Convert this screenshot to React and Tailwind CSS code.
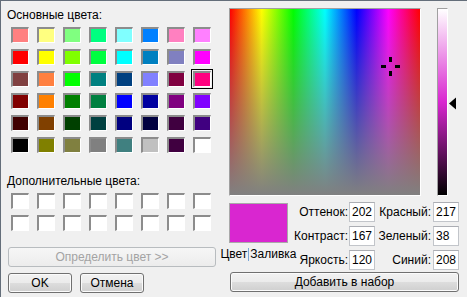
const basicColors = [
  'bg-[#ff8080]', 'bg-[#ffff80]', 'bg-[#80ff80]', 'bg-[#00ff80]', 'bg-[#80ffff]', 'bg-[#0080ff]', 'bg-[#ff80c0]', 'bg-[#ff80ff]',
  'bg-[#ff0000]', 'bg-[#ffff00]', 'bg-[#80ff00]', 'bg-[#00ff40]', 'bg-[#00ffff]', 'bg-[#0080c0]', 'bg-[#8080c0]', 'bg-[#ff00ff]',
  'bg-[#804040]', 'bg-[#ff8040]', 'bg-[#00ff00]', 'bg-[#008080]', 'bg-[#004080]', 'bg-[#8080ff]', 'bg-[#800040]', 'bg-[#ff0080]',
  'bg-[#800000]', 'bg-[#ff8000]', 'bg-[#008000]', 'bg-[#008040]', 'bg-[#0000ff]', 'bg-[#0000a0]', 'bg-[#800080]', 'bg-[#8000ff]',
  'bg-[#400000]', 'bg-[#804000]', 'bg-[#004000]', 'bg-[#004040]', 'bg-[#000080]', 'bg-[#000040]', 'bg-[#400040]', 'bg-[#400080]',
  'bg-[#000000]', 'bg-[#808000]', 'bg-[#808040]', 'bg-[#808080]', 'bg-[#408080]', 'bg-[#c0c0c0]', 'bg-[#400040]', 'bg-[#ffffff]'
]

const SELECTED = 23

function Swatch({ color, selected }) {
  return (
    <div
      className={`w-[18px] h-[16px] border-t-2 border-l-2 border-t-[#8c8c8c] border-l-[#8c8c8c] border-r border-b border-r-white border-b-white ${color} ${selected ? 'outline outline-black outline-offset-1' : ''}`}
    />
  )
}

function Button({ children, disabled, className = '' }) {
  if (disabled) {
    return (
      <div className={`h-[20px] flex items-center justify-center rounded-[3px] border border-[#b8bcbf] bg-[linear-gradient(to_bottom,#f6f6f6,#ececec)] text-[#a3a3a3] ${className}`}>
        {children}
      </div>
    )
  }
  return (
    <div className={`h-[20px] flex items-center justify-center rounded-[3px] border border-[#707070] shadow-[inset_0_0_0_1px_#fbfbfb] bg-[linear-gradient(to_bottom,#f2f2f2_0%,#ebebeb_50%,#dddddd_51%,#cfcfcf_100%)] ${className}`}>
      {children}
    </div>
  )
}

function Field({ value }) {
  return (
    <div className="h-[20px] w-[26px] bg-white border border-[#c2c5ca] border-t-[#abadb3] pl-[2px] leading-[18px]">
      {value}
    </div>
  )
}

export default function App() {
  return (
    <div className="w-[467px] h-[297px] bg-[#f0f0f0] border-t border-l border-[#646e7a] flex font-['Liberation_Sans',Arial,sans-serif] text-[12px] text-black overflow-hidden">
      {/* left side: palettes */}
      <div className="w-[221px] flex flex-col">
        <div className="ml-[6px] mt-[7px] leading-[14px]">Основные цвета:</div>
        <div className="ml-[10px] mt-[5px] grid grid-cols-[repeat(8,18px)] gap-x-[8px] gap-y-[6px]">
          {basicColors.map((c, i) => (
            <Swatch key={i} color={c} selected={i === SELECTED} />
          ))}
        </div>
        <div className="ml-[6px] mt-[21px] leading-[14px]">Дополнительные цвета:</div>
        <div className="ml-[10px] mt-[5px] grid grid-cols-[repeat(8,18px)] gap-x-[8px] gap-y-[6px]">
          {Array.from({ length: 16 }).map((_, i) => (
            <Swatch key={i} color="bg-white" />
          ))}
        </div>
        <Button disabled className="ml-[7px] mt-[16px] w-[208px]">Определить цвет &gt;&gt;</Button>
        <div className="ml-[7px] mt-[6px] flex gap-[8px]">
          <Button className="w-[64px]">OK</Button>
          <Button className="w-[64px]">Отмена</Button>
        </div>
      </div>

      {/* right side: spectrum and values */}
      <div className="ml-[7px] flex flex-col">
        <div className="mt-[7px] flex">
          <div className="w-[192px] h-[188px] border-t border-l border-[#a0a0a0] border-r border-b border-r-white border-b-white bg-[linear-gradient(to_right,#ff0000,#ffff00,#00ff00,#00ffff,#0000ff,#ff00ff,#ff0000)]">
            <div className="relative w-full h-full bg-[linear-gradient(to_bottom,rgba(128,128,128,0),#808080)]">
              <svg className="absolute left-[150px] top-[47px]" width="21" height="21" viewBox="0 0 21 21">
                <rect x="1" y="9" width="5" height="3" fill="#000" />
                <rect x="15" y="9" width="5" height="3" fill="#000" />
                <rect x="9" y="1" width="3" height="5" fill="#000" />
                <rect x="9" y="15" width="3" height="5" fill="#000" />
              </svg>
            </div>
          </div>
          <div className="ml-[16px] w-[11px] h-[188px] border-t border-l border-[#a0a0a0] border-r border-b border-r-white border-b-white bg-[linear-gradient(to_bottom,#ffffff,#d926d0_50%,#000000)]" />
          <svg className="mt-[89px] ml-[1px]" width="8" height="13" viewBox="0 0 8 13">
            <polygon points="0,6.5 7,0.5 7,12.5" fill="#000" />
          </svg>
        </div>

        <div className="mt-[6px] flex">
          <div className="w-[59px] flex flex-col items-center">
            <div className="mt-[1px] w-[59px] h-[40px] bg-[#d926d0] border border-[#a9a9a9]" />
            <div className="mt-[4px] leading-[14px] whitespace-nowrap flex items-center">
              <span>Цвет</span>
              <span className="w-px h-[13px] bg-[#7aa6d6] mx-px" />
              <span>Заливка</span>
            </div>
          </div>
          <div className="ml-px grid grid-cols-[60px_26px_58px_26px] gap-y-[4px] items-center">
            <div className="text-right pr-[1px]">Оттенок:</div>
            <Field value="202" />
            <div className="text-right pr-[2px]">Красный:</div>
            <Field value="217" />
            <div className="text-right pr-[1px]">Контраст:</div>
            <Field value="167" />
            <div className="text-right pr-[2px]">Зеленый:</div>
            <Field value="38" />
            <div className="text-right pr-[1px]">Яркость:</div>
            <Field value="120" />
            <div className="text-right pr-[2px]">Синий:</div>
            <Field value="208" />
          </div>
        </div>

        <Button className="ml-px mt-[2px] w-[229px]">Добавить в набор</Button>
      </div>
    </div>
  )
}
